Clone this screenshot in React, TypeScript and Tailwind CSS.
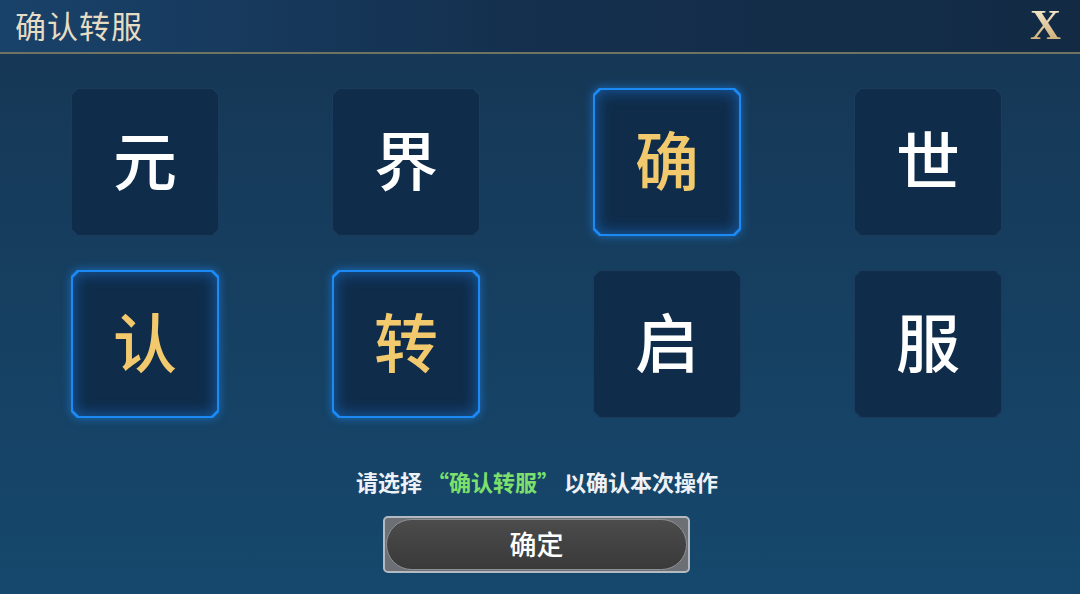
import React from 'react';

const cells = [
  { ch: '元', on: false },
  { ch: '界', on: false },
  { ch: '确', on: true },
  { ch: '世', on: false },
  { ch: '认', on: true },
  { ch: '转', on: true },
  { ch: '启', on: false },
  { ch: '服', on: false },
];

const cjk = "font-['Noto_Sans_CJK_SC','Noto_Sans',sans-serif]";
const chamfer =
  '[clip-path:polygon(6px_0,calc(100%_-_6px)_0,100%_6px,100%_calc(100%_-_6px),calc(100%_-_6px)_100%,6px_100%,0_calc(100%_-_6px),0_6px)]';

function Tile({ ch, on }: { ch: string; on: boolean }) {
  return (
    <div className={on ? 'drop-shadow-[0_0_5px_rgba(30,140,255,0.6)]' : ''}>
      <div
        className={`h-[148px] w-[148px] ${chamfer} ${
          on ? 'bg-[#1b8af5] p-[2px]' : 'bg-[#1a3b5c] p-px'
        }`}
      >
        <div
          className={`flex h-full w-full items-center justify-center bg-[#0f2c4a] pb-[10px] ${chamfer} ${
            on ? 'shadow-[inset_0_0_16px_rgba(30,130,240,0.6)]' : ''
          }`}
        >
          <span
            className={`${cjk} text-[64px] font-medium leading-none ${
              on ? 'text-[#f2c96c]' : 'text-white'
            }`}
          >
            {ch}
          </span>
        </div>
      </div>
    </div>
  );
}

export default function App() {
  return (
    <div className="flex h-[594px] w-full flex-col overflow-hidden bg-gradient-to-b from-[#163654] to-[#15486d]">
      <div className="flex h-[54px] shrink-0 items-center justify-between border-b-2 border-[#6f7462] bg-gradient-to-r from-[#19426a] via-[#142f4d] to-[#122a44] pb-[4px] pl-[15px] pr-[19px]">
        <span className={`${cjk} text-[31px] font-normal leading-none tracking-[1px] text-[#e6dcc4]`}>
          确认转服
        </span>
        <span className="bg-gradient-to-b from-[#fbf3dc] to-[#c9a468] bg-clip-text font-['Liberation_Serif',serif] text-[43px] font-bold leading-none text-transparent">
          X
        </span>
      </div>

      <div className="grid grid-cols-[repeat(4,148px)] gap-x-[113px] gap-y-[34px] pl-[71px] pt-[34px]">
        {cells.map((c) => (
          <Tile key={c.ch} ch={c.ch} on={c.on} />
        ))}
      </div>

      <div className={`${cjk} mt-[47px] pr-[6px] text-center text-[22px] font-bold leading-[32px] text-[#eef2f6]`}>
        请选择 <span className="text-[#7ee06c]">“确认转服”</span> 以确认本次操作
      </div>

      <div className="mt-[19px] flex justify-center pr-[7px]">
        <div className="h-[57px] w-[307px] rounded-[5px] border-2 border-[#b4bac1] bg-[#6c6f73] p-px">
          <div className="flex h-full w-full items-center justify-center rounded-full border border-[#8d9196] bg-gradient-to-b from-[#4c4c4c] via-[#424242] to-[#3a3a3a] pb-[2px]">
            <span className={`${cjk} text-[27px] font-medium leading-none text-white`}>确定</span>
          </div>
        </div>
      </div>
    </div>
  );
}
